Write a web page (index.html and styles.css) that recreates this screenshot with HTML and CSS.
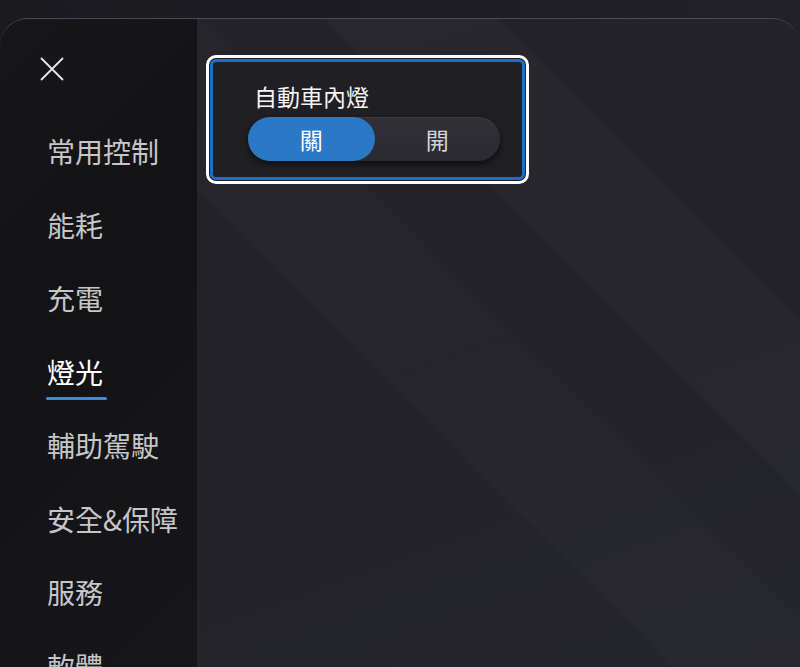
FILE: index.html
```html
<!DOCTYPE html>
<html lang="zh-Hant">
<head>
<meta charset="utf-8">
<link rel="stylesheet" href="styles.css">
</head>
<body>
<div class="panel">
  <aside class="sidebar">
    <div class="close">
      <svg width="24" height="24" viewBox="0 0 24 24"><path d="M1 1 L23 23 M23 1 L1 23" stroke="#e8e8e8" stroke-width="1.8" fill="none"/></svg>
    </div>
    <ul class="nav">
      <li class="nav-item">常用控制</li>
      <li class="nav-item">能耗</li>
      <li class="nav-item">充電</li>
      <li class="nav-item active">燈光</li>
      <li class="nav-item">輔助駕駛</li>
      <li class="nav-item">安全&amp;保障</li>
      <li class="nav-item">服務</li>
      <li class="nav-item">軟體</li>
    </ul>
  </aside>
  <main class="main">
    <div class="focus-ring">
      <div class="card">
        <div class="card-title">自動車內燈</div>
        <div class="toggle">
          <div class="seg on">關</div>
          <div class="seg">開</div>
        </div>
      </div>
    </div>
  </main>
</div>
</body>
</html>
```

FILE: styles.css
```css
html, body {
  margin: 0;
  padding: 0;
  height: 100%;
  overflow: hidden;
}
body {
  background: linear-gradient(60deg, #19181d 0%, #1d1c22 60%, #222128 100%);
  font-family: "Noto Sans CJK TC", "Noto Sans", sans-serif;
}
.panel {
  margin-top: 18px;
  height: calc(100% - 18px);
  border-radius: 28px 28px 0 0;
  border-top: 1px solid #4b4b57;
  box-sizing: border-box;
  overflow: hidden;
  display: flex;
  background: #222228;
}
.sidebar {
  width: 197px;
  flex: none;
  background: linear-gradient(135deg, #17171b 0%, #131316 40%, #17171b 100%);
}
.close {
  margin: 38px 0 0 40px;
  width: 24px;
  height: 24px;
}
.close svg { display: block; }
.nav {
  list-style: none;
  margin: 34px 0 0 0;
  padding: 0 0 0 47px;
}
.nav-item {
  position: relative;
  height: 73.5px;
  line-height: 73.5px;
  font-size: 28px;
  color: #c6c6c8;
  white-space: nowrap;
}
.nav-item.active { color: #ffffff; }
.nav-item.active::after {
  content: "";
  position: absolute;
  left: -1px;
  bottom: 9px;
  width: 61px;
  height: 3px;
  border-radius: 2px;
  background: #3a8cdb;
}
.main {
  flex: 1;
  padding: 36px 0 0 9px;
  background:
    linear-gradient(45deg, rgba(255,255,255,0) 38%, rgba(255,255,255,0.015) 38%, rgba(255,255,255,0.015) 52%, rgba(255,255,255,0) 52%),
    linear-gradient(45deg, rgba(255,255,255,0) 62%, rgba(255,255,255,0.018) 62%, rgba(255,255,255,0.018) 76%, rgba(255,255,255,0) 76%),
    linear-gradient(160deg, #232329 0%, #222228 50%, #25252c 100%);
}
.focus-ring {
  width: 315px;
  border: 3px solid #ffffff;
  border-radius: 10px;
  padding: 1px;
  background: #1d1d22;
}
.card {
  border: 3px solid #1b6fc6;
  border-radius: 6px;
  background: #1f1f24;
  padding: 19px 0 16px 35px;
}
.card-title {
  padding-left: 6px;
  height: 30px;
  line-height: 30px;
  font-size: 23px;
  color: #f4f4f4;
  margin-bottom: 6px;
}
.toggle {
  width: 252px;
  height: 44px;
  border-radius: 22px;
  background: linear-gradient(180deg, #303036 0%, #2a2a30 100%);
  box-shadow: 0 3px 6px rgba(0,0,0,0.55), inset 0 1px 0 rgba(255,255,255,0.06);
  display: flex;
}
.seg {
  width: 126px;
  height: 44px;
  line-height: 44px;
  text-align: center;
  font-size: 23px;
  color: #d4d4d6;
  border-radius: 22px;
}
.seg.on {
  width: 127px;
  background: #2a78c6;
  color: #ffffff;
}
```
